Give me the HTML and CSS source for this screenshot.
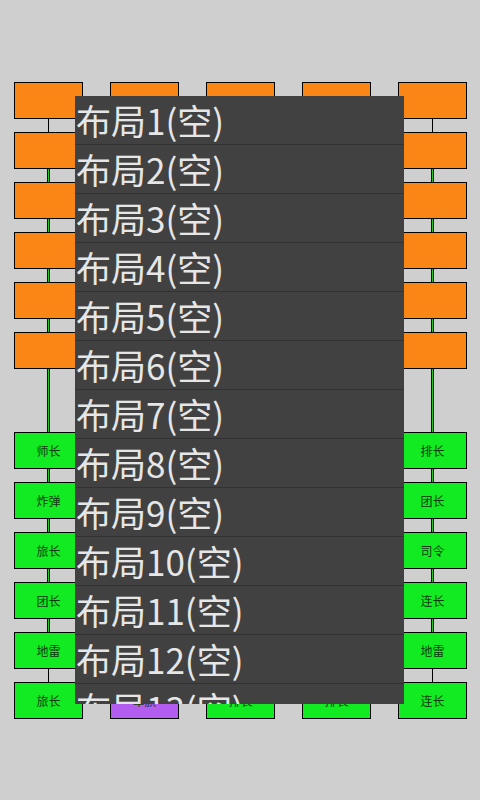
FILE: index.html
```html
<!DOCTYPE html>
<html>
<head>
<meta charset="utf-8">
<link rel="stylesheet" href="styles.css">
</head>
<body>
<div class="screen">
  <svg class="lines" width="480" height="800" viewBox="0 0 480 800">
    <g class="road">
      <line x1="48.5" y1="100" x2="432.5" y2="100"/>
      <line x1="48.5" y1="700" x2="432.5" y2="700"/>
      <line x1="48.5" y1="200" x2="432.5" y2="200"/>
      <line x1="48.5" y1="250" x2="432.5" y2="250"/>
      <line x1="48.5" y1="300" x2="432.5" y2="300"/>
      <line x1="48.5" y1="500" x2="432.5" y2="500"/>
      <line x1="48.5" y1="550" x2="432.5" y2="550"/>
      <line x1="48.5" y1="600" x2="432.5" y2="600"/>
      <line x1="48.5" y1="100" x2="48.5" y2="150"/>
      <line x1="432.5" y1="100" x2="432.5" y2="150"/>
      <line x1="48.5" y1="650" x2="48.5" y2="700"/>
      <line x1="432.5" y1="650" x2="432.5" y2="700"/>
      <line x1="144.5" y1="100" x2="144.5" y2="350"/>
      <line x1="240.5" y1="100" x2="240.5" y2="350"/>
      <line x1="336.5" y1="100" x2="336.5" y2="350"/>
      <line x1="144.5" y1="450" x2="144.5" y2="700"/>
      <line x1="240.5" y1="450" x2="240.5" y2="700"/>
      <line x1="336.5" y1="450" x2="336.5" y2="700"/>
    </g>
    <g class="rail-outer">
      <line x1="48.5" y1="150" x2="48.5" y2="650"/>
      <line x1="432.5" y1="150" x2="432.5" y2="650"/>
      <line x1="240.5" y1="350" x2="240.5" y2="450"/>
      <line x1="48.5" y1="150" x2="432.5" y2="150"/>
      <line x1="48.5" y1="350" x2="432.5" y2="350"/>
      <line x1="48.5" y1="450" x2="432.5" y2="450"/>
      <line x1="48.5" y1="650" x2="432.5" y2="650"/>
    </g>
    <g class="rail-inner">
      <line x1="48.5" y1="150" x2="48.5" y2="650"/>
      <line x1="432.5" y1="150" x2="432.5" y2="650"/>
      <line x1="240.5" y1="350" x2="240.5" y2="450"/>
      <line x1="48.5" y1="150" x2="432.5" y2="150"/>
      <line x1="48.5" y1="350" x2="432.5" y2="350"/>
      <line x1="48.5" y1="450" x2="432.5" y2="450"/>
      <line x1="48.5" y1="650" x2="432.5" y2="650"/>
    </g>
  </svg>

  <div class="board">
    <div class="cell orange"></div><div class="cell orange"></div><div class="cell orange"></div><div class="cell orange"></div><div class="cell orange"></div>
    <div class="cell orange"></div><div class="cell orange"></div><div class="cell orange"></div><div class="cell orange"></div><div class="cell orange"></div>
    <div class="cell orange"></div><div class="cell orange"></div><div class="cell orange"></div><div class="cell orange"></div><div class="cell orange"></div>
    <div class="cell orange"></div><div class="cell orange"></div><div class="cell orange"></div><div class="cell orange"></div><div class="cell orange"></div>
    <div class="cell orange"></div><div class="cell orange"></div><div class="cell orange"></div><div class="cell orange"></div><div class="cell orange"></div>
    <div class="cell orange"></div><div class="cell orange"></div><div class="cell orange"></div><div class="cell orange"></div><div class="cell orange"></div>

    <div class="middle"></div>

    <div class="cell green">师长</div><div class="cell green">营长</div><div class="cell green">工兵</div><div class="cell green">工兵</div><div class="cell green">排长</div>
    <div class="cell green">炸弹</div><div class="cell green">团长</div><div class="cell green">营长</div><div class="cell green">连长</div><div class="cell green">团长</div>
    <div class="cell green">旅长</div><div class="cell green">军长</div><div class="cell green">师长</div><div class="cell green">工兵</div><div class="cell green">司令</div>
    <div class="cell green">团长</div><div class="cell green">炸弹</div><div class="cell green">旅长</div><div class="cell green">营长</div><div class="cell green">连长</div>
    <div class="cell green">地雷</div><div class="cell green">地雷</div><div class="cell green">排长</div><div class="cell green">地雷</div><div class="cell green">地雷</div>
    <div class="cell green">旅长</div><div class="cell purple">军旗</div><div class="cell green">排长</div><div class="cell green">排长</div><div class="cell green">连长</div>
  </div>

  <div class="menu">
    <div class="item">布局1(空)</div>
    <div class="item">布局2(空)</div>
    <div class="item">布局3(空)</div>
    <div class="item">布局4(空)</div>
    <div class="item">布局5(空)</div>
    <div class="item">布局6(空)</div>
    <div class="item">布局7(空)</div>
    <div class="item">布局8(空)</div>
    <div class="item">布局9(空)</div>
    <div class="item">布局10(空)</div>
    <div class="item">布局11(空)</div>
    <div class="item">布局12(空)</div>
    <div class="item">布局13(空)</div>
  </div>
</div>
</body>
</html>
```

FILE: styles.css
```css
html, body {
  margin: 0;
  padding: 0;
}
body {
  background: #cfcfcf;
  font-family: "Noto Sans CJK SC", "Noto Sans", sans-serif;
}
.screen {
  position: relative;
  width: 480px;
  height: 800px;
  overflow: hidden;
}
.lines {
  position: absolute;
  left: 0;
  top: 0;
}
.road line {
  stroke: #000;
  stroke-width: 1;
}
.rail-outer line {
  stroke: #0a1a0a;
  stroke-width: 3;
}
.rail-inner line {
  stroke: #1ec81e;
  stroke-width: 1;
}
.board {
  position: relative;
  padding: 82px 0 0 14px;
  display: grid;
  grid-template-columns: repeat(5, 69px);
  grid-auto-rows: 37px;
  column-gap: 27px;
  row-gap: 13px;
}
.middle {
  grid-column: 1 / -1;
}
.cell {
  box-sizing: border-box;
  border: 1px solid #000;
  display: flex;
  align-items: center;
  justify-content: center;
  font-size: 12px;
  color: #0f3a0f;
  line-height: 1;
}
.orange { background: #fa8616; }
.green { background: #12ea22; }
.purple { background: #b25cf0; }

.menu {
  position: absolute;
  left: 75px;
  top: 96px;
  width: 329px;
  height: 608px;
  overflow: hidden;
  background: #414141;
}
.item {
  box-sizing: border-box;
  height: 49px;
  border-bottom: 1px solid #323232;
  padding-left: 1px;
  font-size: 35px;
  line-height: 48px;
  color: #e6e6e6;
  white-space: nowrap;
}
```
